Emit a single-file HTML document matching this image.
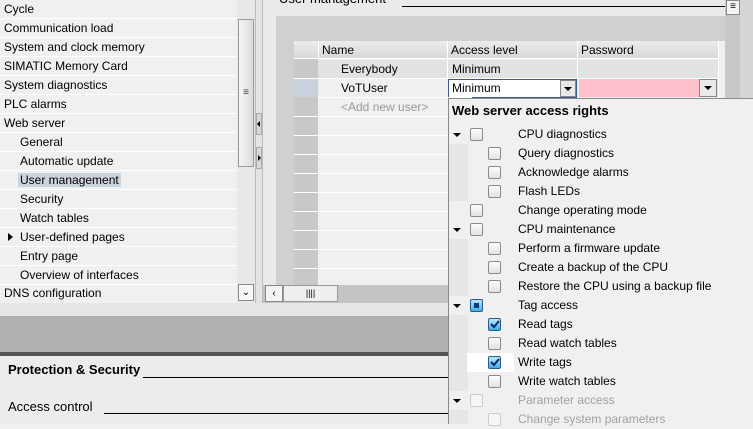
<!DOCTYPE html>
<html><head><style>
*{box-sizing:border-box;margin:0;padding:0}
body{width:753px;height:424px;overflow:hidden;position:relative;background:#f0f0f0;font-family:"Liberation Sans",sans-serif;font-size:12px;color:#000}
.a{position:absolute}
.lrow{position:absolute;left:0;width:237px;height:19px;border-bottom:1px solid #fff;line-height:18px;padding-left:4px;white-space:nowrap}
.cb{position:absolute;width:13px;height:13px;border:1px solid #8a8a8a;border-radius:2px;background:linear-gradient(#fdfdfd,#e2e2e2)}
.ck{border-color:#2a5c8a;background:linear-gradient(#bfe6fb,#3ab0ea)}
.tri{position:absolute;width:0;height:0;border-left:4px solid transparent;border-right:4px solid transparent;border-top:4px solid #000}
.pt{position:absolute;left:518px;white-space:nowrap;line-height:19px}
.tr{position:absolute;left:294px;width:154px;height:1px;background:#fff}
</style></head><body>
<!-- left tree -->
<div class="a" style="left:0;top:0;width:237px;height:303px;background:#f0f0f0"></div>
<div class="lrow" style="top:0">Cycle</div>
<div class="lrow" style="top:19px">Communication load</div>
<div class="lrow" style="top:38px">System and clock memory</div>
<div class="lrow" style="top:57px">SIMATIC Memory Card</div>
<div class="lrow" style="top:76px">System diagnostics</div>
<div class="lrow" style="top:95px">PLC alarms</div>
<div class="lrow" style="top:114px">Web server</div>
<div class="lrow" style="top:133px;padding-left:20px">General</div>
<div class="lrow" style="top:152px;padding-left:20px">Automatic update</div>
<div class="lrow" style="top:171px;padding-left:20px"><span style="background:#ccd4dc;padding:0 2px;margin-left:-2px">User management</span></div>
<div class="lrow" style="top:190px;padding-left:20px">Security</div>
<div class="lrow" style="top:209px;padding-left:20px">Watch tables</div>
<div class="lrow" style="top:228px;padding-left:20px">User-defined pages</div>
<div class="a" style="left:8px;top:233px;border-top:4px solid transparent;border-bottom:4px solid transparent;border-left:5px solid #000"></div>
<div class="lrow" style="top:247px;padding-left:20px">Entry page</div>
<div class="lrow" style="top:266px;padding-left:20px">Overview of interfaces</div>
<div class="lrow" style="top:284px;border:none">DNS configuration</div>
<!-- vscroll -->
<div class="a" style="left:237px;top:0;width:18px;height:303px;background:#e8e8e8"></div>
<div class="a" style="left:238px;top:19px;width:16px;height:148px;border:1px solid #9a9a9a;background:linear-gradient(90deg,#f4f4f4,#dcdcdc);text-align:center;line-height:146px;font-size:10px;color:#444">≡</div>
<div class="a" style="left:238px;top:284px;width:16px;height:17px;border:1px solid #8a8a8a;background:#f6f6f6;text-align:center;font-size:10px;line-height:15px">⌄</div>
<!-- splitter -->
<div class="a" style="left:255px;top:0;width:8px;height:303px;background:#e4e4e4;border-left:1px solid #bbb;border-right:1px solid #bbb"></div>
<div class="a" style="left:256px;top:113px;width:6px;height:22px;background:#d8d8d8;border:1px solid #aaa"></div>
<div class="a" style="left:256px;top:147px;width:6px;height:22px;background:#d8d8d8;border:1px solid #aaa"></div>
<div class="a" style="left:257px;top:121px;border-top:3px solid transparent;border-bottom:3px solid transparent;border-right:3px solid #000"></div>
<div class="a" style="left:258px;top:155px;border-top:3px solid transparent;border-bottom:3px solid transparent;border-left:3px solid #000"></div>
<!-- right area -->
<div class="a" style="left:263px;top:0;width:462px;height:303px;background:#eaeaea"></div>
<div class="a" style="left:279px;top:-9px;font-size:13px;white-space:nowrap">User management</div>
<div class="a" style="left:402px;top:6px;width:323px;height:1px;background:#000"></div>
<div class="a" style="left:276px;top:16px;width:449px;height:287px;background:#d0d0d0"></div>
<div class="a" style="left:725px;top:0;width:15px;height:303px;background:#c8c8c8"></div>
<div class="a" style="left:740px;top:0;width:13px;height:303px;background:#d6d6d6"></div>
<div class="a" style="left:726px;top:0;width:14px;height:15px;border:1px solid #8a8a8a;background:#f4f4f4;text-align:center;font-size:10px;line-height:12px">≡</div>
<div class="a" style="left:318px;top:41px;width:407px;height:244px;background:#f0f0f0"></div>
<div class="a" style="left:294px;top:41px;width:24px;height:244px;background:#c8c8c8"></div>
<!-- header -->
<div class="a" style="left:294px;top:41px;width:425px;height:18px;background:linear-gradient(#ececec,#d8d8d8);border-bottom:1px solid #fff"></div>
<div class="a" style="left:318px;top:41px;width:1px;height:18px;background:#fff"></div>
<div class="a" style="left:447px;top:41px;width:1px;height:18px;background:#fff"></div>
<div class="a" style="left:577px;top:41px;width:1px;height:18px;background:#fff"></div>
<div class="a" style="left:718px;top:41px;width:1px;height:57px;background:#fff"></div>
<div class="a" style="left:322px;top:43px">Name</div>
<div class="a" style="left:451px;top:43px">Access level</div>
<div class="a" style="left:581px;top:43px">Password</div>
<!-- rows -->
<div class="a" style="left:318px;top:60px;width:400px;height:18px;background:#e2e2e2"></div>
<div class="a" style="left:447px;top:60px;width:1px;height:18px;background:#fff"></div>
<div class="a" style="left:577px;top:60px;width:1px;height:18px;background:#fff"></div>
<div class="a" style="left:341px;top:62px">Everybody</div>
<div class="a" style="left:452px;top:62px">Minimum</div>
<div class="a" style="left:294px;top:78px;width:424px;height:1px;background:#fff"></div>
<div class="a" style="left:294px;top:79px;width:24px;height:18px;background:#c8d2dc"></div>
<div class="a" style="left:341px;top:81px">VoTUser</div>
<div class="a" style="left:448px;top:79px;width:129px;height:19px;background:#fff;border:1px solid #3c5a8a"></div>
<div class="a" style="left:452px;top:81px">Minimum</div>
<div class="a" style="left:560px;top:80px;width:16px;height:17px;border:1px solid #888;background:#e8e8e8"></div>
<div class="tri" style="left:564px;top:87px"></div>
<div class="a" style="left:579px;top:79px;width:139px;height:18px;background:#ffc0cb"></div>
<div class="a" style="left:699px;top:79px;width:18px;height:18px;border:1px solid #888;background:#eaeaea"></div>
<div class="tri" style="left:704px;top:86px"></div>
<div class="a" style="left:341px;top:100px;color:#9a9a9a">&lt;Add new user&gt;</div>
<div class="tr" style="top:97px;left:318px"></div>
<div class="tr" style="top:116px"></div><div class="tr" style="top:135px"></div><div class="tr" style="top:154px"></div>
<div class="tr" style="top:173px"></div><div class="tr" style="top:192px"></div><div class="tr" style="top:211px"></div>
<div class="tr" style="top:230px"></div><div class="tr" style="top:249px"></div><div class="tr" style="top:268px"></div>
<!-- hscroll -->
<div class="a" style="left:263px;top:285px;width:462px;height:18px;background:#c4c4c4"></div>
<div class="a" style="left:265px;top:285px;width:18px;height:17px;border:1px solid #888;background:#f4f4f4;text-align:center;font-size:10px;line-height:15px">‹</div>
<div class="a" style="left:283px;top:285px;width:55px;height:17px;border:1px solid #999;background:#efefef;text-align:center;font-size:9px;line-height:15px">||||</div>
<!-- bottom -->
<div class="a" style="left:0;top:303px;width:448px;height:13px;background:#e6e6e6"></div>
<div class="a" style="left:0;top:316px;width:448px;height:36px;background:#b0b0b0"></div>
<div class="a" style="left:0;top:352px;width:448px;height:4px;background:#555"></div>
<div class="a" style="left:0;top:356px;width:448px;height:68px;background:#ececec"></div>
<div class="a" style="left:8px;top:362px;font-weight:bold;font-size:13px">Protection &amp; Security</div>
<div class="a" style="left:143px;top:377px;width:305px;height:1px;background:#000"></div>
<div class="a" style="left:8px;top:399px;font-size:13px">Access control</div>
<div class="a" style="left:104px;top:413px;width:344px;height:1px;background:#000"></div>
<!-- popup -->
<div class="a" style="left:448px;top:98px;width:305px;height:326px;background:#f0f0f0;border-left:1px solid #8a8a8a;border-top:1px solid #8a8a8a"></div>
<div class="a" style="left:449px;top:144px;width:19px;height:57px;background:#e6e6e6"></div>
<div class="a" style="left:449px;top:239px;width:19px;height:57px;background:#e6e6e6"></div>
<div class="a" style="left:449px;top:315px;width:19px;height:76px;background:#e6e6e6"></div>
<div class="a" style="left:467px;top:353px;width:47px;height:19px;background:#fff"></div>
<div class="a" style="left:449px;top:410px;width:19px;height:14px;background:#e6e6e6"></div>
<div class="a" style="left:452px;top:103px;font-weight:bold;font-size:13px">Web server access rights</div>

<div class="tri" style="left:453px;top:133px"></div><div class="cb" style="left:470px;top:128px"></div><div class="pt" style="top:125px">CPU diagnostics</div>
<div class="cb" style="left:488px;top:147px"></div><div class="pt" style="top:144px">Query diagnostics</div>
<div class="cb" style="left:488px;top:166px"></div><div class="pt" style="top:163px">Acknowledge alarms</div>
<div class="cb" style="left:488px;top:185px"></div><div class="pt" style="top:182px">Flash LEDs</div>
<div class="cb" style="left:470px;top:204px"></div><div class="pt" style="top:201px">Change operating mode</div>
<div class="tri" style="left:453px;top:228px"></div><div class="cb" style="left:470px;top:223px"></div><div class="pt" style="top:220px">CPU maintenance</div>
<div class="cb" style="left:488px;top:242px"></div><div class="pt" style="top:239px">Perform a firmware update</div>
<div class="cb" style="left:488px;top:261px"></div><div class="pt" style="top:258px">Create a backup of the CPU</div>
<div class="cb" style="left:488px;top:280px"></div><div class="pt" style="top:277px">Restore the CPU using a backup file</div>
<div class="tri" style="left:453px;top:304px"></div><div class="cb ck" style="left:470px;top:299px"><div style="position:absolute;left:3px;top:3px;width:5px;height:5px;background:#0a3a78"></div></div><div class="pt" style="top:296px">Tag access</div>
<div class="cb ck" style="left:488px;top:318px"><svg width="11" height="11" style="position:absolute;left:0;top:0"><path d="M2 5 L5 8 L10 2" stroke="#0a2a60" stroke-width="2" fill="none"/></svg></div><div class="pt" style="top:315px">Read tags</div>
<div class="cb" style="left:488px;top:337px"></div><div class="pt" style="top:334px">Read watch tables</div>
<div class="cb ck" style="left:488px;top:356px"><svg width="11" height="11" style="position:absolute;left:0;top:0"><path d="M2 5 L5 8 L10 2" stroke="#0a2a60" stroke-width="2" fill="none"/></svg></div><div class="pt" style="top:353px">Write tags</div>
<div class="cb" style="left:488px;top:375px"></div><div class="pt" style="top:372px">Write watch tables</div>
<div class="tri" style="left:453px;top:399px"></div><div class="cb" style="left:470px;top:394px;border-color:#ccc;background:#f6f6f6"></div><div class="pt" style="top:391px;color:#a0a0a0">Parameter access</div>
<div class="cb" style="left:488px;top:413px;border-color:#ccc;background:#f6f6f6"></div><div class="pt" style="top:410px;color:#a0a0a0">Change system parameters</div>
</body></html>
